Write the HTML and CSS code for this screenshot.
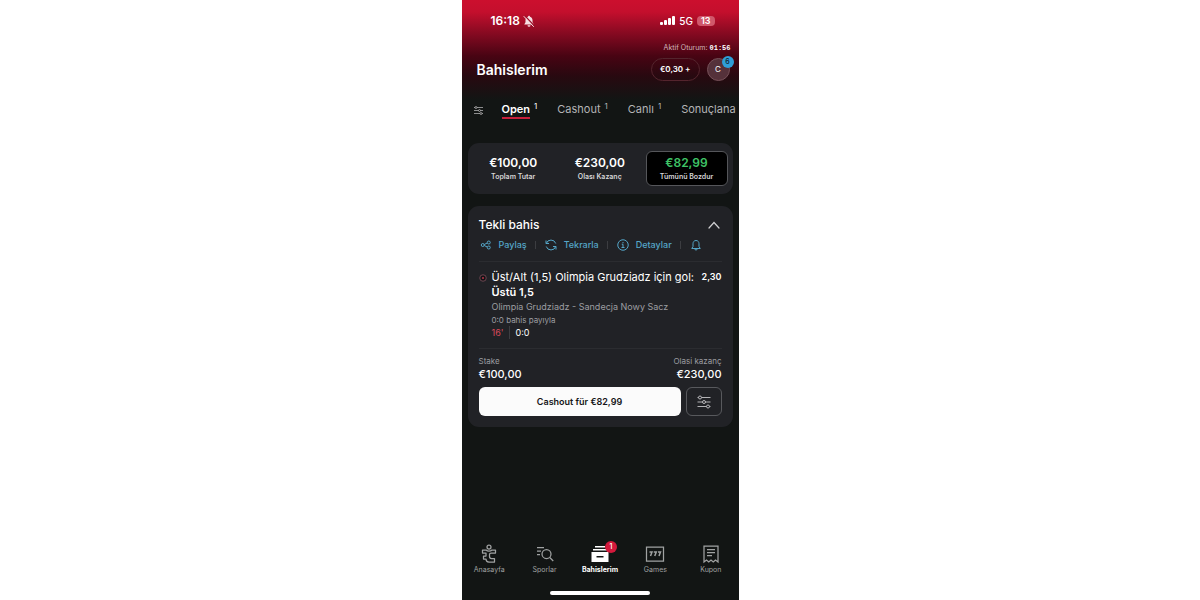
FILE: index.html
```html
<!DOCTYPE html>
<html lang="tr">

<head>
  <meta charset="UTF-8">
  <meta name="viewport" content="width=device-width, initial-scale=1.0">
  <title>Bahislerim</title>
  <link rel="stylesheet" href="styles.css">
</head>

<body>
  <div class="phone">
    <!-- status bar -->
    <div class="status">
      <div class="status-side">
        <span class="clock">16:18</span>
        <svg width="12" height="12" viewBox="0 0 24 24">
          <path d="M12 1.500c-1.200 0-2 .8-2 1.800C7 4.200 5 6.500 5 10v4.500L2.500 19h19L19 14.500V10c0-3.500-2-5.800-5-6.700 0-1-.8-1.800-2-1.800zM9 20.500a3 3 0 0 0 6 0z" fill="#f6dfe3"/>
          <path d="M4 2l18 19" stroke="#9c1029" stroke-width="2.500"/>
          <path d="M2 3l19 20" stroke="#f6dfe3" stroke-width="2" stroke-linecap="round"/>
        </svg>
      </div>
      <div class="status-side">
        <svg width="15" height="10" viewBox="0 0 15 10" fill="#fff">
          <rect x="0" y="6" width="3" height="3" rx="1"/>
          <rect x="4" y="4" width="3" height="5" rx="1"/>
          <rect x="8" y="2" width="3" height="7" rx="1"/>
          <rect x="12" y="0" width="3" height="9" rx="1"/>
        </svg>
        <span class="network">5G</span>
        <span class="battery">13</span>
      </div>
    </div>

    <!-- header -->
    <header class="header">
      <p class="session">Aktif Oturum: <b>01:56</b></p>
      <div class="header-row">
        <h1>Bahislerim</h1>
        <button class="balance">€0,30 +</button>
        <button class="avatar">C<span class="badge badge-blue">6</span></button>
      </div>
    </header>

    <nav class="tabs">
      <button class="tabs-filter" aria-label="Filtre">
        <svg width="9" height="9" viewBox="0 0 18 18" fill="#151415" stroke="#b5b5b7" stroke-width="1.500">
          <path d="M0 3h18M0 9h18M0 15h18"/>
          <circle cx="4" cy="3" r="2"/>
          <circle cx="11" cy="9" r="2"/>
          <circle cx="14" cy="15" r="2"/>
        </svg>
      </button>
      <a class="tab active" href="#open"><span>Open</span><sup>1</sup></a>
      <a class="tab" href="#cashout"><span>Cashout</span><sup>1</sup></a>
      <a class="tab" href="#canli"><span>Canlı</span><sup>1</sup></a>
      <a class="tab" href="#sonuc"><span>Sonuçlana</span></a>
    </nav>

    <main class="content">
      <section class="card summary">
        <div class="total">
          <strong>€100,00</strong>
          <span>Toplam Tutar</span>
        </div>
        <div class="total">
          <strong>€230,00</strong>
          <span>Olası Kazanç</span>
        </div>
        <button class="total total-cashout">
          <strong>€82,99</strong>
          <span>Tümünü Bozdur</span>
        </button>
      </section>

      <section class="card bet">
        <div class="bet-head">
          <h2>Tekli bahis</h2>
          <button class="toggle" aria-label="Kapat">
            <svg width="12" height="8" viewBox="0 0 12 8" fill="none" stroke="#d0d0d2" stroke-width="1.200" stroke-linecap="round">
              <path d="M1 7l5-5.500L11 7"/>
            </svg>
          </button>
        </div>

        <div class="actions">
          <button class="action">
            <svg width="12" height="12" viewBox="0 0 24 24" fill="none" stroke="currentColor" stroke-width="2">
              <circle cx="5.500" cy="12" r="3"/>
              <circle cx="17.500" cy="7" r="3"/>
              <circle cx="17.500" cy="17" r="3"/>
              <path d="M8.500 11l6-3M8.500 13l6 3"/>
            </svg>
            Paylaş
          </button>
          <button class="action">
            <svg width="12" height="12" viewBox="0 0 24 24" fill="none" stroke="currentColor" stroke-width="2">
              <path d="M2 3v6h6M2.500 9A10 10 0 0 1 21.500 9"/>
              <path d="M22 21v-6h-6M21.500 15A10 10 0 0 1 2.500 15"/>
            </svg>
            Tekrarla
          </button>
          <button class="action">
            <svg width="12" height="12" viewBox="0 0 24 24" fill="none" stroke="currentColor" stroke-width="2">
              <circle cx="12" cy="12" r="10.500"/>
              <path d="M9.500 10.500H12V17M9 17h6M12 6v2.500"/>
            </svg>
            Detaylar
          </button>
          <button class="action" aria-label="Bildirim">
            <svg width="12" height="12" viewBox="0 0 24 24" fill="none" stroke="currentColor" stroke-width="2">
              <path d="M12 3c-4 0-6 3-6 6.500V15l-2.500 4h17L18 15V9.500C18 6 16 3 12 3zM9.500 19.500a2.500 2.500 0 0 0 5 0"/>
            </svg>
          </button>
        </div>

        <div class="pick">
          <svg class="pick-dot" width="8" height="8" viewBox="0 0 16 16">
            <circle cx="8" cy="8" r="6.500" fill="#141315" stroke="#875663" stroke-width="1.500"/>
            <circle cx="8" cy="8" r="2" fill="#b8354a"/>
          </svg>
          <div class="pick-info">
            <p class="pick-title">Üst/Alt (1,5) Olimpia Grudziadz için gol: <b>Üstü 1,5</b></p>
            <p class="pick-match">Olimpia Grudziadz - Sandecja Nowy Sacz</p>
            <p class="pick-note">0:0 bahis payıyla</p>
            <p class="pick-score"><span class="minute">16'</span><span>0:0</span></p>
          </div>
          <span class="odds">2,30</span>
        </div>

        <div class="stakes">
          <p><span>Stake</span><b>€100,00</b></p>
          <p><span>Olasi kazanç</span><b>€230,00</b></p>
        </div>

        <div class="buttons">
          <button class="cashout">Cashout für €82,99</button>
          <button class="settings" aria-label="Cashout ayarları">
            <svg width="14" height="14" viewBox="0 0 28 28" fill="#212226" stroke="#c4c4c6" stroke-width="1.800">
              <path d="M1 5h26M1 14h26M1 23h26"/>
              <circle cx="6" cy="5" r="3"/>
              <circle cx="14" cy="14" r="3"/>
              <circle cx="22" cy="23" r="3"/>
            </svg>
          </button>
        </div>
      </section>
    </main>

    <!-- bottom navigation -->
    <nav class="bottom">
      <a class="item" href="#home">
        <svg width="20" height="20" viewBox="0 0 40 40" fill="none" stroke="currentColor" stroke-width="2.500" stroke-linejoin="round">
          <circle cx="20" cy="6" r="4"/>
          <path d="M7 12h7c3 3 9 3 12 0h7v6h-9c-2 0-3 1-3 3v4c0 3 1 4 4 4h6v7H20c-5 0-6-3-6-6H9v-6h5v-6H7z"/>
        </svg>
        <span>Anasayfa</span>
      </a>
      <a class="item" href="#sports">
        <svg width="20" height="20" viewBox="0 0 40 40" fill="none" stroke="currentColor" stroke-width="2.500">
          <path d="M4 7h14M4 14h8M4 21h6"/>
          <circle cx="23" cy="20" r="9"/>
          <path d="M29.500 27l7 7"/>
        </svg>
        <span>Sporlar</span>
      </a>
      <a class="item active" href="#bets">
        <span class="item-icon">
          <svg width="20" height="20" viewBox="0 0 40 40" fill="currentColor">
            <path d="M10 4h20v3H10zM6 10h28v3H6z"/>
            <path d="M3 16h34v20H3zM13 24v3h14v-3z" fill-rule="evenodd"/>
          </svg>
          <span class="badge badge-red">1</span>
        </span>
        <span>Bahislerim</span>
      </a>
      <a class="item" href="#games">
        <svg width="20" height="20" viewBox="0 0 40 40" fill="none" stroke="currentColor" stroke-width="2.500">
          <path d="M3 6h34v28H3z"/>
          <path d="M9 16h5l-3 8M17.500 16h5l-3 8M26 16h5l-3 8" stroke-width="3"/>
        </svg>
        <span>Games</span>
      </a>
      <a class="item" href="#coupon">
        <svg width="20" height="20" viewBox="0 0 40 40" fill="none" stroke="currentColor" stroke-width="2.500">
          <path d="M6 4h28v32l-5-4-4.500 4-4.500-4-4.500 4-4.500-4-5 4z"/>
          <path d="M12 11h16M12 17h16M12 23h10"/>
        </svg>
        <span>Kupon</span>
      </a>
    </nav>
    <div class="home-bar"></div>
  </div>
</body>

</html>
```
FILE: styles.css
```css
* {
  box-sizing: border-box;
}

body {
  margin: 0;
  background-color: #fff;
  font-family: Inter, "Liberation Sans", sans-serif;
  color: #fff;
}

h1,
h2,
p {
  margin: 0;
}

button {
  padding: 0;
  border: 0;
  background: none;
  color: inherit;
  font-family: inherit;
}

a {
  color: inherit;
  text-decoration: none;
}

svg {
  display: block;
  flex-shrink: 0;
}

.phone {
  display: flex;
  flex-direction: column;
  max-width: 277px;
  min-height: 100vh;
  margin: 0 auto;
  background: linear-gradient(#cc0f2e 0, #c40f2d 12px, #8a0a22 32px, #480413 56px, #280910 76px, #121514 100px) #121514;
}

/* status bar */
.status {
  display: flex;
  justify-content: space-between;
  align-items: center;
  height: 41px;
  padding: 0 24px 0 29px;
}

.status-side {
  display: flex;
  align-items: center;
  gap: 4px;
}

.status-side:first-child {
  gap: 3px;
}

.clock {
  font-size: 12px;
  font-weight: 600;
}

.network {
  font-size: 10px;
  font-weight: 500;
}

.battery {
  padding: 0 4px;
  border-radius: 4px;
  background-color: #d0586b;
  font-size: 9px;
  font-weight: 600;
  line-height: 10px;
}

/* header */
.header {
  padding: 0 9px 0 15px;
}

.session {
  margin-right: -1px;
  color: #d3b8bd;
  font-size: 7px;
  line-height: 14px;
  text-align: right;
}

.session b {
  color: #fff;
  font-family: "Liberation Mono", monospace;
}

.header-row {
  display: flex;
  align-items: center;
  gap: 7px;
  height: 28px;
}

.header h1 {
  flex: 1;
  font-size: 14px;
  font-weight: 600;
}

.balance {
  height: 23px;
  padding: 0 8px;
  border: 1px solid #54242d;
  border-radius: 12px;
  font-size: 8px;
  font-weight: 600;
}

.avatar {
  position: relative;
  width: 23px;
  height: 23px;
  border: 1px solid #765058;
  border-radius: 50%;
  background-color: #55313a;
  font-size: 8px;
}

.badge {
  position: absolute;
  width: 12px;
  height: 12px;
  border-radius: 50%;
  font-size: 7px;
  font-weight: 500;
  line-height: 12px;
  text-align: center;
}

.badge-blue {
  top: -3px;
  right: -5px;
  background-color: #2f9fd8;
  color: #0d2230;
}

.badge-red {
  top: -3px;
  right: -7px;
  background-color: #d3193c;
  color: #fff;
}

/* tabs */
.tabs {
  display: flex;
  align-items: center;
  gap: 20px;
  height: 54px;
  padding-left: 12px;
}

.tabs-filter {
  margin-right: -1px;
}

.tab {
  display: flex;
  color: #b4b4b6;
  font-size: 11px;
  line-height: 16px;
}

.tab span {
  border-bottom: 2px solid transparent;
}

.tab sup {
  margin-left: 4px;
  font-size: 8px;
  line-height: 10px;
}

.tab.active {
  color: #fff;
  font-weight: 600;
}

.tab.active span {
  border-bottom-color: #c8203c;
}

.tab.active sup {
  font-weight: 400;
}

/* cards */
.content {
  display: flex;
  flex-direction: column;
  gap: 12px;
  flex: 1;
  padding: 6px;
}

.card {
  border-radius: 11px;
  background-color: #212226;
}

.summary {
  display: grid;
  grid-template-columns: 1fr 1fr 82px;
  gap: 5px;
  padding: 8px 5px;
}

.total {
  display: flex;
  flex-direction: column;
  align-items: center;
  justify-content: center;
  height: 35px;
}

.total strong {
  font-size: 12px;
  font-weight: 600;
  line-height: 16px;
}

.total span {
  color: #d6d6d8;
  font-size: 7px;
  font-weight: 600;
  line-height: 11px;
}

.total-cashout {
  border: 1px solid #55565a;
  border-radius: 6px;
  background-color: #000;
}

.total-cashout strong {
  color: #3fc466;
}

.bet {
  padding: 10px 11px 11px;
}

.bet-head {
  display: flex;
  justify-content: space-between;
  align-items: center;
  padding-right: 2px;
}

.bet-head h2 {
  font-size: 12px;
  font-weight: 500;
  line-height: 18px;
}

.actions {
  display: flex;
  align-items: center;
  padding: 3px 1px 8px;
  border-bottom: 1px solid #2b2c30;
  color: #55a6c8;
}

.action {
  display: flex;
  align-items: center;
  gap: 7px;
  font-size: 9px;
  font-weight: 500;
  line-height: 16px;
}

.action + .action::before {
  content: "";
  height: 8px;
  margin: 0 2px 0 8px;
  border-left: 1px solid #3c3d41;
}

.pick {
  display: flex;
  padding: 8px 0 9px;
  border-bottom: 1px solid #2b2c30;
}

.pick-dot {
  margin: 4px 5px 0 0;
}

.pick-info {
  flex: 1;
}

.pick-title {
  font-size: 11px;
  line-height: 15px;
}

.pick-title b {
  display: block;
  font-weight: 600;
}

.pick-match {
  color: #9c9da1;
  font-size: 9px;
  line-height: 14px;
}

.pick-note {
  color: #9c9da1;
  font-size: 8px;
  line-height: 12px;
}

.pick-score {
  display: flex;
  font-size: 9px;
  line-height: 13px;
}

.minute {
  margin-right: 5px;
  padding-right: 6px;
  border-right: 1px solid #3c3d41;
  color: #d94a5c;
}

.odds {
  font-size: 9px;
  font-weight: 600;
  line-height: 14px;
}

.stakes {
  display: flex;
  justify-content: space-between;
  padding: 6px 0;
}

.stakes p {
  display: flex;
  flex-direction: column;
}

.stakes p:last-child {
  align-items: flex-end;
}

.stakes span {
  color: #9c9da1;
  font-size: 8px;
  line-height: 12px;
}

.stakes b {
  font-size: 11px;
  font-weight: 500;
  line-height: 14px;
}

.buttons {
  display: flex;
  gap: 5px;
}

.cashout {
  flex: 1;
  height: 29px;
  border-radius: 6px;
  background-color: #fbfbfb;
  color: #151517;
  font-size: 9px;
  font-weight: 600;
}

.settings {
  display: flex;
  align-items: center;
  justify-content: center;
  width: 36px;
  height: 29px;
  border: 1px solid #58595d;
  border-radius: 6px;
}

/* bottom navigation */
.bottom {
  display: grid;
  grid-template-columns: repeat(5, 1fr);
}

.item {
  display: flex;
  flex-direction: column;
  align-items: center;
  color: #a0a2a2;
  font-size: 7px;
  line-height: 11px;
}

.item.active {
  color: #fff;
  font-weight: 700;
}

.item-icon {
  position: relative;
}

.home-bar {
  width: 100px;
  height: 4px;
  margin: 16px auto 5px;
  border-radius: 2px;
  background-color: #fff;
}
```
